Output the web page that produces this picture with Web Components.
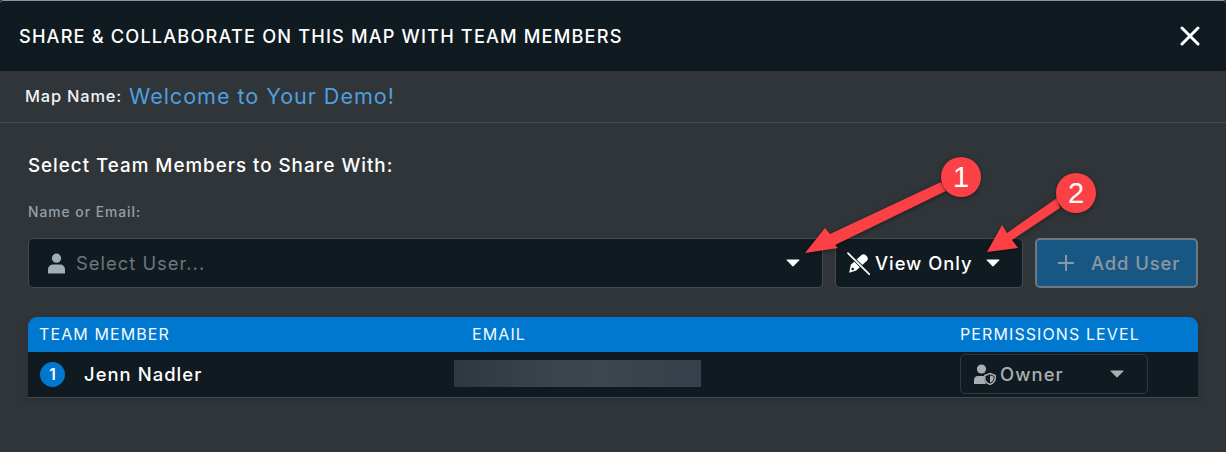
<!DOCTYPE html>
<html lang="en"><head><meta charset="utf-8"><title>Share</title>
<style>
html,body{margin:0;padding:0;background:#303539}
body{font-family:Inter,"Liberation Sans",sans-serif;color:#fff}
</style></head><body>
<share-dialog>
  <dialog-header slot="head">SHARE &amp; COLLABORATE ON THIS MAP WITH TEAM MEMBERS</dialog-header>
  <map-name slot="name" label="Map Name:">Welcome to Your Demo!</map-name>
  <share-form slot="form"></share-form>
  <team-table slot="table"></team-table>
  <callout-arrows slot="over"></callout-arrows>
</share-dialog>
<script>
const caret='<svg width="14" height="8" viewBox="0 0 14 8" style="display:block"><path d="M1.2 .4H12.8Q13.9 .4 13.3 1.3L7.8 7Q7 7.8 6.2 7L.7 1.3Q.1 .4 1.2 .4Z" fill="currentColor"/></svg>';
function def(name,html){customElements.define(name,class extends HTMLElement{constructor(){super();this.attachShadow({mode:'open'}).innerHTML=typeof html==='function'?html(this):html}})}
def('share-dialog',`<style>:host{display:block;position:relative;width:1226px;height:452px;overflow:hidden;background:#303539;box-sizing:border-box;border-top:1px solid #7f97a8;border-radius:4px 4px 0 0}
.f{display:flex;flex-direction:column}</style><div class="f"><slot name="head"></slot><slot name="name"></slot><slot name="form"></slot><slot name="table"></slot></div><slot name="over"></slot>`);
def('dialog-header',`<style>:host{display:flex;align-items:center;justify-content:space-between;height:70px;background:#101b21;padding:0 26px 0 19px;box-sizing:border-box;font:500 18.2px Inter,sans-serif;letter-spacing:1.16px;color:#fff}
svg{display:block}</style><span><slot></slot></span><svg width="20" height="20" viewBox="0 0 20 20"><path d="M2 2L18 18M18 2L2 18" stroke="#fff" stroke-width="3" stroke-linecap="round"/></svg>`);
def('map-name',el=>`<style>:host{display:flex;align-items:center;height:52px;box-sizing:border-box;border-bottom:1px solid #454b50;padding:0 0 2px 25px;gap:7px;font-family:Inter,sans-serif}
b{font-weight:500;font-size:16.4px;letter-spacing:.82px;color:#f2f4f5}span{font-size:21.6px;color:#4f9fdf;letter-spacing:.95px}</style><b>${el.getAttribute('label')}</b><span><slot></slot></span>`);
def('user-select',`<style>:host{flex:1;display:flex;align-items:center;height:50px;box-sizing:border-box;background:#101b21;border:1px solid #454b50;border-radius:5px;padding:0 22px 0 19px;font:400 18.4px Inter,sans-serif;color:#6d757c;letter-spacing:1px}
span{flex:1;margin-left:11px}.c{color:#fff}svg{display:block}</style>
<svg width="17" height="21" viewBox="0 0 17 21"><circle cx="8.5" cy="5.2" r="4.6" fill="#a0aeb8"/><path d="M0 20.5V17Q0 11.5 5.5 11.5H11.5Q17 11.5 17 17V20.5Z" fill="#a0aeb8"/></svg><span>Select User...</span><div class="c">${caret}</div>`);
def('role-select',`<style>:host{display:flex;align-items:center;width:188px;height:50px;box-sizing:border-box;background:#101b21;border:1px solid #454b50;border-radius:5px;padding:0 22px 0 11px;font:500 18.4px Inter,sans-serif;color:#fff;letter-spacing:.98px}
span{flex:1;margin-left:5px}svg{display:block}</style>
<svg width="23" height="23" viewBox="0 0 23 23"><path d="M2.2 20.8L3.8 12.8L14.8 2.8Q16.8 1.6 18.6 3L20.2 4.8Q21.4 6.8 20.2 8.6L9.2 18.6Z" fill="#fff"/><circle cx="5.7" cy="17" r="1.3" fill="#101b21"/><path d="M1 1.2L23 23" stroke="#101b21" stroke-width="3.4"/><path d="M1 1.2L23 23" stroke="#fff" stroke-width="1.7" stroke-linecap="round"/></svg><span>View Only</span>${caret}`);
def('add-button',`<style>:host{display:flex;align-items:center;width:163px;height:50px;box-sizing:border-box;background:#185784;border:2px solid #6d7a84;border-radius:5px;padding:0 0 0 20px;font:500 18.4px Inter,sans-serif;color:#8c98a1;letter-spacing:.92px}
span{margin-left:16px}svg{display:block}</style>
<svg width="18" height="18" viewBox="0 0 18 18"><path d="M9 1V17M1 9H17" stroke="#8c98a1" stroke-width="2"/></svg><span>Add User</span>`);
def('share-form',`<style>:host{display:block;padding:32px 28px 0;font-family:Inter,sans-serif}
h2{margin:0;font-weight:500;font-size:18.8px;line-height:22px;letter-spacing:.98px;color:#fff}
label{display:block;margin-top:27px;font-weight:500;font-size:13.8px;line-height:16px;letter-spacing:1px;color:#93a1ab}
.r{display:flex;gap:12px;margin-top:18px}</style>
<h2>Select Team Members to Share With:</h2><label>Name or Email:</label><div class="r"><user-select></user-select><role-select></role-select><add-button></add-button></div>`);
def('team-table',`<style>:host{display:block;margin:29px 28px 0;font-family:Inter,sans-serif;box-shadow:0 2px 6px rgba(0,0,0,.12);border-radius:9px 9px 0 0}
.g{display:grid;grid-template-columns:432px 489px 1fr;padding-left:12px}
.h{height:35px;box-sizing:border-box;padding-bottom:2px;align-items:center;background:#0078d0;border-radius:9px 9px 0 0;font-size:16px;letter-spacing:1.1px;color:#f4f9fd}
.h span{margin-left:-1px}.h span:nth-child(2){margin-left:0}
.b{height:46px;box-sizing:border-box;align-items:center;background:#101b21;border-bottom:1px solid #454b50}
.n{display:flex;align-items:center;gap:19px;font-weight:500;font-size:18.4px;letter-spacing:1.06px;color:#fff}
.n span{margin-top:-2px}
i{width:25px;height:25px;border-radius:50%;background:#0078d0;display:grid;place-items:center;font-style:normal;font-weight:600;font-size:15.4px;letter-spacing:0;color:#fff}
.m{width:247px;height:27px;margin:-2px 0 0 -18px;background:linear-gradient(90deg,#2f383e,#3b444c 40%,#3d464e 60%,#36404a)}
.p{display:flex;align-items:center;width:188px;height:40px;box-sizing:border-box;margin:-1px 0 0 -1px;border:1px solid #2f383e;border-radius:5px;padding:0 23px 0 12px;font-weight:500;font-size:18.4px;letter-spacing:1.1px;color:#a9aeb1}
.p span{flex:1;margin-left:4px}svg{display:block}</style>
<div class="g h"><span>TEAM MEMBER</span><span>EMAIL</span><span>PERMISSIONS LEVEL</span></div>
<div class="g b"><div class="n"><i>1</i><span>Jenn Nadler</span></div><div class="m"></div>
<div class="p"><svg width="23" height="21" viewBox="0 0 23 21"><circle cx="8.5" cy="5" r="4.6" fill="#a9aeb1"/><path d="M1 20V16.5Q1 12 5 12H11Q10.5 16 13 20Z" fill="#a9aeb1"/><path d="M17 9.5L22.2 11.5V14.5Q22 18.5 17 20.5Q12 18.5 11.8 14.5V11.5Z" fill="#101b21" stroke="#a9aeb1" stroke-width="1.5"/><path d="M17 11.5V18.5Q20.6 17 20.6 14V12.6Z" fill="#a9aeb1"/></svg><span>Owner</span>${caret}</div></div>`);
def('callout-arrows',`<style>:host{position:absolute;left:0;top:-1px;width:1226px;height:452px;pointer-events:none;font-family:"Liberation Sans",sans-serif}
svg{position:absolute;left:0;top:0;filter:drop-shadow(0 1px 2px rgba(0,0,0,.45))}
b{position:absolute;width:40px;height:40px;line-height:40px;text-align:center;border-radius:50%;background:#fb4146;color:#fff;font-weight:400;font-size:29px;box-shadow:0 1px 4px rgba(0,0,0,.4)}</style>
<svg width="1226" height="452"><path d="M941 182L946 191L835 245L838 248L805 253L825 228L830 234Z" fill="#fb4146"/><path d="M1057 198L1060 208L1012 240L1018 248L987 252L1002 225L1007 233Z" fill="#fb4146"/></svg>
<b style="left:941px;top:157px">1</b><b style="left:1056px;top:173px">2</b>`);
</script>
</body></html>
